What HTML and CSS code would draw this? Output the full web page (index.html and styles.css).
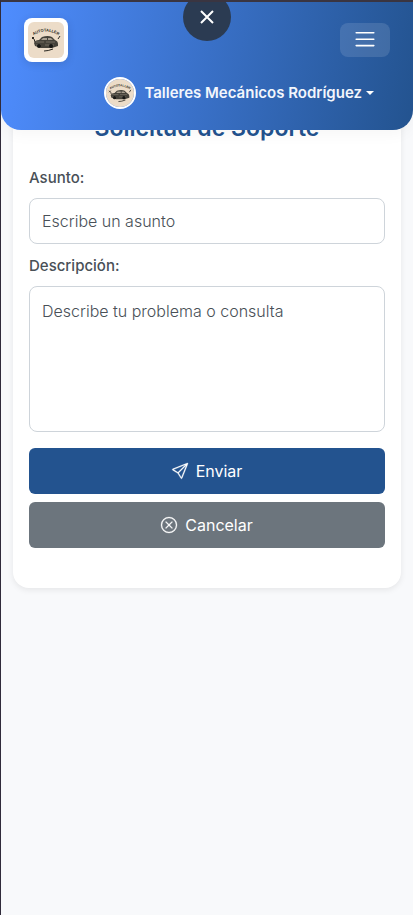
FILE: index.html
```html
<!DOCTYPE html>
<html lang="es">
<head>
<meta charset="utf-8">
<meta name="viewport" content="width=device-width, initial-scale=1">
<title>Solicitud de Soporte</title>
<link rel="stylesheet" href="styles.css">
</head>
<body>
<header class="topbar">
  <div class="topbar-row">
    <a class="brand" href="#" aria-label="Inicio">
      <svg viewBox="0 0 36 36">
        <g id="workshop">
          <rect width="36" height="36" fill="#ecdcc8"/>
          <path id="arch" d="M3 15Q18 4 33 15" fill="none"/>
          <text class="logo-text"><textPath href="#arch" startOffset="50%" text-anchor="middle">AUTOTALLER</textPath></text>
          <path d="M4 15l2 2 1 3M30 17l2-3M4 17l2-2" fill="none" stroke="#292721" stroke-width="1"/>
          <path d="M6 21q1-3 5-3l3-3q6-2 10 0l3 3q3 1 3 4v2l-3 1-3 1H13l-6-2z" fill="#45423a"/>
          <path d="M13 18l2-2h4v2zM20 16h3l2 2h-5z" fill="#a99f90"/>
          <path d="M8 20h8M18 20h9M8 23h5M17 23h9" stroke="#877f72" stroke-width=".7"/>
          <circle cx="11" cy="24" r="2" fill="#171715"/><circle cx="23" cy="24" r="2" fill="#171715"/>
          <path d="M16 29q4 0 9-2" fill="none" stroke="#292721" stroke-width="1"/>
        </g>
      </svg>
    </a>
    <button class="toggler" type="button" aria-label="Menú">
      <svg viewBox="0 0 30 30" fill="none" stroke="#fff" stroke-width="2" stroke-linecap="round"><path d="M4 6h22M4 14h22M4 22h22"/></svg>
    </button>
  </div>
  <button class="account" type="button">
    <svg class="avatar" viewBox="0 0 36 36"><use href="#workshop"/></svg>
    <span>Talleres Mecánicos Rodríguez</span>
    <i class="caret"></i>
  </button>
  <button class="close" type="button" aria-label="Cerrar">
    <svg viewBox="0 0 16 16" fill="none" stroke="#fff" stroke-width="2"><path d="M2 2l12 12M14 2L2 14"/></svg>
  </button>
</header>
<main class="page">
  <form class="card">
    <h1>Solicitud de Soporte</h1>
    <label for="subject">Asunto:</label>
    <input id="subject" type="text" placeholder="Escribe un asunto">
    <label for="details">Descripción:</label>
    <textarea id="details" placeholder="Describe tu problema o consulta"></textarea>
    <div class="actions">
      <button class="btn send" type="submit">
        <svg viewBox="0 0 16 16" fill="currentColor" stroke="currentColor" stroke-width=".3"><path d="M15.854.146a.5.5 0 0 1 .11.54l-5.819 14.547a.75.75 0 0 1-1.329.124l-3.178-4.995L.643 7.184a.75.75 0 0 1 .124-1.33L15.314.037a.5.5 0 0 1 .54.11ZM6.636 10.07l2.761 4.338L14.13 2.576zm6.787-8.201L1.591 6.602l4.339 2.76z"/></svg>
        Enviar
      </button>
      <button class="btn cancel" type="button">
        <svg viewBox="0 0 16 16" fill="currentColor" stroke="currentColor" stroke-width=".3"><path d="M8 15A7 7 0 1 1 8 1a7 7 0 0 1 0 14m0 1A8 8 0 1 0 8 0a8 8 0 0 0 0 16"/><path d="M4.646 4.646a.5.5 0 0 1 .708 0L8 7.293l2.646-2.647a.5.5 0 0 1 .708.708L8.707 8l2.647 2.646a.5.5 0 0 1-.708.708L8 8.707l-2.646 2.647a.5.5 0 0 1-.708-.708L7.293 8 4.646 5.354a.5.5 0 0 1 0-.708"/></svg>
        Cancelar
      </button>
    </div>
  </form>
</main>
</body>
</html>
```
FILE: styles.css
```css
* { box-sizing: border-box; }

body {
  margin: 0;
  min-height: 100vh;
  border-top: 2px solid #3a3541;
  border-left: 1px solid #302b3b;
  background: #f8f9fb;
  color: #495057;
  font: 16px/24px Inter, sans-serif;
}

button, input, textarea { font: inherit; }
button { border: 0; cursor: pointer; }
.logo-text { font: 700 4px "Liberation Sans", sans-serif; fill: #292721; }

.topbar {
  position: sticky;
  top: 0;
  z-index: 1;
  display: flex;
  flex-direction: column;
  gap: 15px;
  padding: 16px 23px 21px;
  border-radius: 0 0 20px 20px;
  background: linear-gradient(100deg, #4f8dff, #23538f);
  box-shadow: 0 4px 16px rgb(0 0 0 / 4%);
}

.topbar-row {
  display: flex;
  align-items: center;
  justify-content: space-between;
}

.brand {
  width: 44px;
  height: 44px;
  padding: 4px;
  border-radius: 8px;
  background: #fff;
  box-shadow: 0 2px 8px rgb(0 0 0 / 12%);
}

.brand svg {
  display: block;
  width: 36px;
  height: 36px;
  border-radius: 6px;
}

.toggler {
  display: grid;
  place-items: center;
  width: 50px;
  height: 34px;
  padding: 0;
  border-radius: 8px;
  background: rgb(255 255 255 / 12%);
}

.toggler svg { width: 24px; height: 24px; }

.account {
  display: flex;
  align-items: center;
  align-self: flex-end;
  margin-right: 16px;
  padding: 0;
  background: none;
  color: #f3f6fc;
  font-size: 15px;
  font-weight: 600;
  white-space: nowrap;
}

.avatar {
  width: 32px;
  height: 32px;
  margin-right: 8px;
  border: 2px solid #fff;
  border-radius: 50%;
}

.caret {
  margin-left: 4px;
  border: 4px solid transparent;
  border-top-color: #fff;
  border-bottom: 0;
}

.close {
  position: absolute;
  top: -9px;
  left: 50%;
  display: grid;
  place-items: center;
  width: 48px;
  height: 48px;
  padding: 0;
  border-radius: 50%;
  background: #2b3b52;
  transform: translateX(-50%);
}

.close svg { width: 16px; height: 16px; }

.page { padding: 0 12px; }

.card {
  display: flex;
  flex-direction: column;
  margin-top: -32px;
  padding: 16px 16px 40px;
  border-radius: 16px;
  background: #fff;
  box-shadow: 0 2px 6px rgb(0 0 0 / 8%);
}

h1 {
  margin: 0 0 24px;
  color: #23538f;
  font-size: 23px;
  font-weight: 600;
  line-height: 28px;
  text-align: center;
}

label {
  margin-bottom: 8px;
  font-size: 15px;
  font-weight: 500;
}

input, textarea {
  width: 100%;
  padding: 10px 12px;
  border: 1px solid #ced4da;
  border-radius: 8px;
  background: #fff;
  color: #495057;
}

input { height: 46px; margin-bottom: 10px; }
textarea { display: block; height: 146px; padding-top: 12px; resize: none; }
::placeholder { color: #495057; font-weight: 300; opacity: 1; }

.actions {
  display: grid;
  gap: 8px;
  margin-top: 16px;
}

.btn {
  display: flex;
  align-items: center;
  justify-content: center;
  gap: 8px;
  height: 46px;
  border-radius: 6px;
  color: #fff;
}

.btn svg { width: 16px; height: 16px; overflow: visible; }
.send { background: #23538f; }
.cancel { background: #6c757d; }
```
